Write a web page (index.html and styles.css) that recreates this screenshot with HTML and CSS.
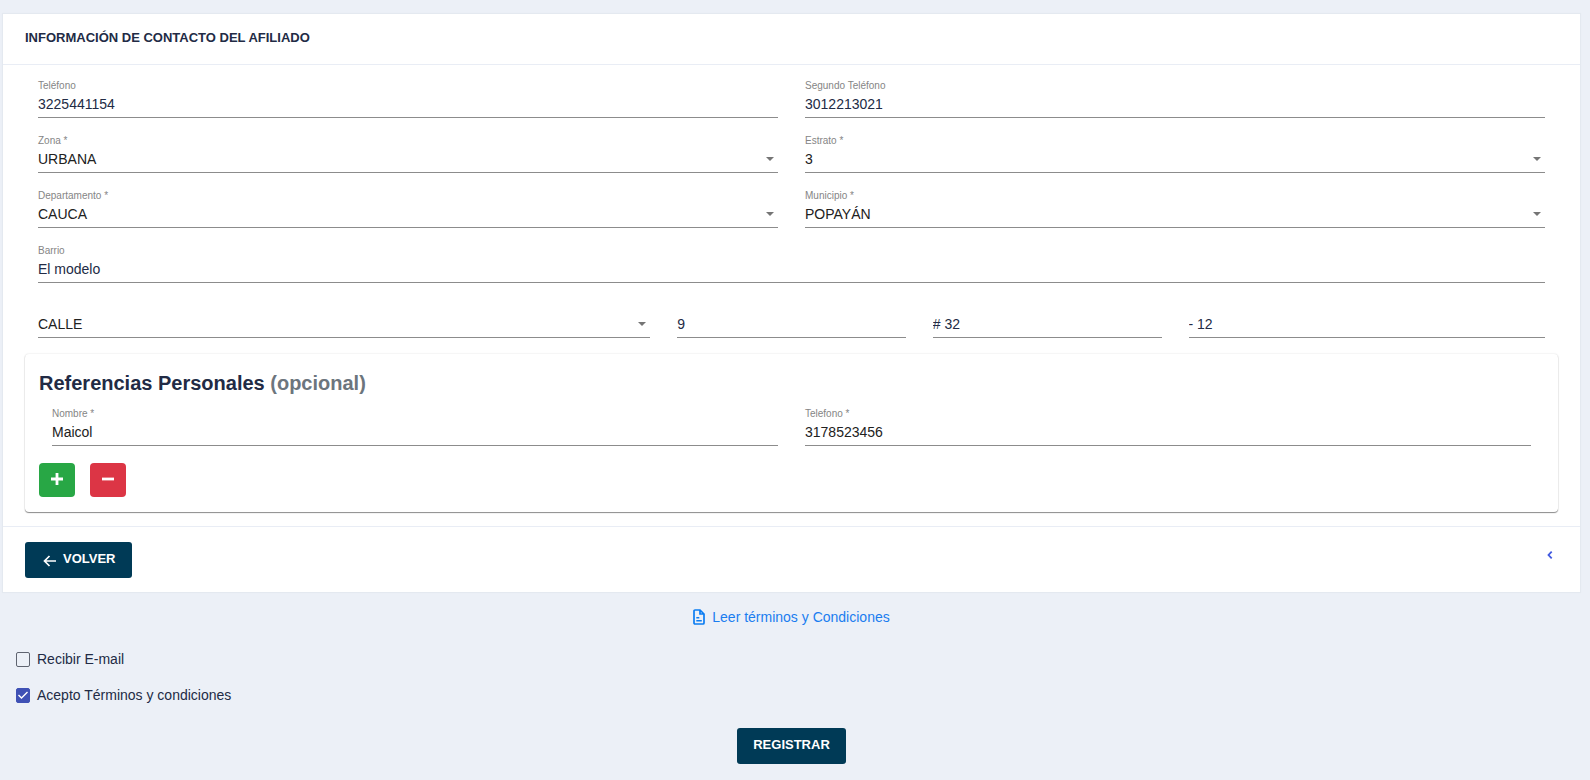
FILE: index.html
```html
<!DOCTYPE html>
<html lang="es">
<head>
<meta charset="utf-8">
<meta name="viewport" content="width=device-width, initial-scale=1">
<title>Información de contacto del afiliado</title>
<link rel="stylesheet" href="styles.css">
</head>
<body>
<form class="page">
  <section class="card">
    <header class="card-header"><h1 class="card-title">INFORMACIÓN DE CONTACTO DEL AFILIADO</h1></header>
    <div class="card-body">
      <div class="grid">
        <div class="field half"><label for="tel">Teléfono</label><input id="tel" type="text" value="3225441154"></div>
        <div class="field half"><label for="tel2">Segundo Teléfono</label><input id="tel2" type="text" value="3012213021"></div>
        <div class="field half"><label for="zona">Zona *</label><select id="zona" class="dark"><option>URBANA</option></select></div>
        <div class="field half"><label for="estrato">Estrato *</label><select id="estrato" class="dark"><option>3</option></select></div>
        <div class="field half"><label for="depto">Departamento *</label><select id="depto" class="dark"><option>CAUCA</option></select></div>
        <div class="field half"><label for="muni">Municipio *</label><select id="muni" class="dark"><option>POPAYÁN</option></select></div>
        <div class="field full"><label for="barrio">Barrio</label><input id="barrio" type="text" value="El modelo"></div>
        <div class="field via"><label for="via"></label><select id="via" class="dark"><option>CALLE</option></select></div>
        <div class="field number"><label for="n1"></label><input id="n1" type="text" value="9"></div>
        <div class="field number"><label for="n2"></label><input id="n2" type="text" value="# 32"></div>
        <div class="field last"><label for="n3"></label><input id="n3" type="text" value="- 12"></div>
      </div>
      <section class="refs">
        <h2 class="refs-title">Referencias Personales <span class="muted">(opcional)</span></h2>
        <div class="grid">
          <div class="field half"><label for="nombre">Nombre *</label><input id="nombre" class="dark" type="text" value="Maicol"></div>
          <div class="field half"><label for="reftel">Telefono *</label><input id="reftel" class="dark" type="text" value="3178523456"></div>
        </div>
        <div class="actions">
          <button type="button" class="square add" aria-label="Agregar"><svg width="14" height="14" viewBox="0 0 14 14"><path d="M7 1v12M1 7h12" stroke="#fff" stroke-width="2.800"/></svg></button>
          <button type="button" class="square remove" aria-label="Quitar"><svg width="14" height="14" viewBox="0 0 14 14"><path d="M1 7h12" stroke="#fff" stroke-width="2.800"/></svg></button>
        </div>
      </section>
    </div>
    <footer class="card-footer">
      <button type="button" class="btn"><svg class="arrow" width="14" height="14" viewBox="0 0 14 14"><path d="M13 7H2M6.500 2L1.500 7l5 5" fill="none" stroke="#fff" stroke-width="1.700"/></svg>VOLVER</button>
      <button type="button" class="prev" aria-label="Anterior"><svg width="6" height="8" viewBox="0 0 6 8"><path d="M4.700 .6L1.500 4l3.200 3.400" fill="none" stroke="#4159e0" stroke-width="1.800"/></svg></button>
    </footer>
  </section>
  <a class="terms" href="#terminos"><svg width="12" height="16" viewBox="0 0 12 16"><path d="M2 1h5L11 5v9a1 1 0 0 1-1 1H2a1 1 0 0 1-1-1V2a1 1 0 0 1 1-1zM7 1v4h4" fill="none" stroke="#0c7df2" stroke-width="1.700"/><path d="M3.300 8.700h3M3.300 11.700h5.500" stroke="#0c7df2" stroke-width="1.400"/></svg>Leer términos y Condiciones</a>
  <div class="checks">
    <label class="check"><input type="checkbox">Recibir E-mail</label>
    <label class="check"><input type="checkbox" checked>Acepto Términos y condiciones</label>
  </div>
  <button type="submit" class="btn submit">REGISTRAR</button>
</form>
</body>
</html>
```
FILE: styles.css
```css
* { box-sizing: border-box; }

body {
  margin: 0;
  background: #ecf0f7;
  color: #222b45;
  font: 14px/20px "Liberation Sans", Arial, sans-serif;
}

.page {
  display: flex;
  flex-direction: column;
  padding: 14px 10px 16px 3px;
}

.card {
  background: #fff;
  box-shadow: 0 0 1px 1px #e4e9f0;
}

.card-header {
  padding: 14px 22px 16px;
  border-bottom: 1px solid #e9edf5;
}

.card-title {
  margin: 0;
  font-size: 13px;
  line-height: 20px;
}

.card-body { padding: 0 22px 14px; }

.grid {
  display: grid;
  grid-template-columns: repeat(12, minmax(0, 1fr));
  gap: 2px 27px;
  padding: 0 13px;
}

.field {
  display: flex;
  flex-direction: column;
  height: 53px;
  padding-top: 15px;
  border-bottom: 1px solid #8c8c8c;
}

.half { grid-column: span 6; }
.full { grid-column: span 12; }
.via { grid-column: span 5; }
.number { grid-column: span 2; }
.last { grid-column: span 3; }

.field label {
  height: 12px;
  font-size: 10px;
  line-height: 12px;
  color: #858585;
}

.field input,
.field select {
  width: 100%;
  height: 24px;
  margin: 0;
  padding: 0;
  border: 0;
  border-radius: 0;
  outline: 0;
  background: transparent;
  color: #222b45;
  font: inherit;
}

.field select {
  appearance: none;
  padding-right: 24px;
  background: url("data:image/svg+xml,%3Csvg xmlns='http://www.w3.org/2000/svg' width='8' height='4'%3E%3Cpath d='M0 0h8L4 4z' fill='%23757575'/%3E%3C/svg%3E") no-repeat right 4px center;
}

.field .dark { color: #212121; }

.refs {
  margin-top: 16px;
  padding: 17px 14px 15px;
  border-radius: 4px;
  box-shadow: 0 1px 1px #8c8c8c, 0 0 2px #dcdcdc;
}

.refs-title {
  margin: 0;
  font-size: 20px;
  line-height: 24px;
}

.muted { color: #6c757d; }

.refs .field {
  height: 51px;
  padding-top: 13px;
}

.actions {
  display: flex;
  gap: 15px;
  margin-top: 17px;
}

.square {
  display: flex;
  align-items: center;
  justify-content: center;
  width: 36px;
  height: 34px;
  padding: 0 0 2px;
  border: 0;
  border-radius: 4px;
}

.add { background: #28a745; }
.remove { background: #dc3545; }

.card-footer {
  display: flex;
  align-items: flex-start;
  justify-content: space-between;
  padding: 15px 27px 14px 22px;
  border-top: 1px solid #e9edf5;
}

.btn {
  display: flex;
  align-items: center;
  height: 36px;
  padding: 0 16px 2px;
  border: 0;
  border-radius: 3px;
  background: #003a56;
  color: #fff;
  font: bold 13px/20px "Liberation Sans", Arial, sans-serif;
}

.arrow { margin: 3px 6px 0 2px; }

.prev {
  display: flex;
  padding: 9px 0;
  border: 0;
  background: transparent;
}

.terms {
  display: flex;
  align-items: center;
  align-self: center;
  gap: 7px;
  margin-top: 15px;
  color: #1a7df0;
  text-decoration: none;
}

.checks {
  display: flex;
  flex-direction: column;
  gap: 16px;
  margin: 22px 13px 23px;
}

.check {
  display: flex;
  align-items: center;
  align-self: flex-start;
  gap: 7px;
}

.check input {
  appearance: none;
  width: 14px;
  height: 15px;
  margin: 0;
  border: 1px solid #5f6470;
  border-radius: 2px;
}

.check input:checked {
  border-color: #3f51b5;
  background: #3f51b5 url("data:image/svg+xml,%3Csvg xmlns='http://www.w3.org/2000/svg' width='12' height='12'%3E%3Cpath d='M1.500 6l3 3 6-6' fill='none' stroke='white' stroke-width='1.400'/%3E%3C/svg%3E") no-repeat center;
}

.submit { align-self: center; }
```
